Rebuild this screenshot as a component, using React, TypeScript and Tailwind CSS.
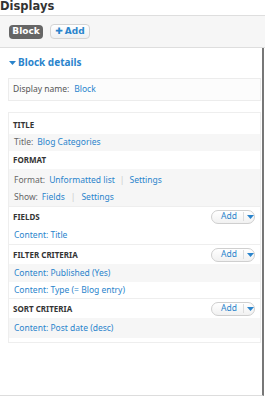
import React from "react";

const blue = "text-[#2a84cc]";

function AddPill() {
  return (
    <div className="flex items-center h-[14px] w-[44px] rounded-full border border-[#cfcfcf] bg-gradient-to-b from-white to-[#f1f1f1] text-[8.5px]">
      <span className={`pl-[9px] w-[31px] ${blue}`}>Add</span>
      <span className="h-[9px] border-l border-[#ddd]" />
      <svg width="7" height="4" viewBox="0 0 7 4" className="ml-[3px]">
        <path d="M0 0 L7 0 L3.5 4 Z" fill="#2a84cc" />
      </svg>
    </div>
  );
}

function Header({ label, add, h = "h-[20px]", extra = "" }: { label: string; add?: boolean; h?: string; extra?: string }) {
  return (
    <div className={`flex items-center justify-between ${h} pl-[4px] pr-[5px] bg-white ${extra}`}>
      <span className="font-bold text-[8px] text-[#333] uppercase">{label}</span>
      {add && <AddPill />}
    </div>
  );
}

function Row({ children, gray, h = "h-[18px]", extra = "" }: { children: React.ReactNode; gray?: boolean; h?: string; extra?: string }) {
  return (
    <div className={`flex items-center ${h} pl-[5px] text-[8.5px] ${gray ? "bg-[#f6f6f6]" : "bg-white"} ${extra}`}>
      {children}
    </div>
  );
}

export default function App() {
  return (
    <div
      className="w-[265px] h-[396px] bg-white overflow-hidden flex flex-col"
      style={{ fontFamily: '"Noto Sans", "Open Sans", sans-serif' }}
    >
      <div
        className="h-[15px] text-[11.5px] font-bold text-[#333] leading-[13px] pl-0"
        style={{ fontFamily: '"DejaVu Sans", Verdana, sans-serif' }}
      >
        Displays
      </div>
      <div className="h-[33px] border-y border-[#dedede] bg-[#f6f6f6] flex items-center gap-[7px] pl-[9px]">
        <div
          className="h-[14px] w-[34px] rounded-[4px] bg-[#666] text-white font-bold text-[9px] flex items-center justify-center"
          style={{ fontFamily: '"DejaVu Sans", Verdana, sans-serif' }}
        >
          Block
        </div>
        <div
          className={`h-[15px] w-[40px] rounded-[4px] border border-[#d4d4d4] bg-gradient-to-b from-white to-[#eef0f2] font-bold text-[9px] flex items-center justify-center ${blue}`}
          style={{ fontFamily: '"DejaVu Sans", Verdana, sans-serif' }}
        >
          <span className="mr-[2px]">✚</span>Add
        </div>
      </div>
      <div className="flex-1 border-r-2 border-r-[#777] border-b border-b-[#ddd] w-[264px] pl-[8px] pr-[1px] pt-[7px]">
        <div className={`flex items-center h-[15px] font-bold text-[10px] ${blue}`}>
          <svg width="7" height="4" viewBox="0 0 7 4" className="mr-[2px] ml-[1px]">
            <path d="M0 0 L7 0 L3.5 4 Z" fill="#2a84cc" />
          </svg>
          Block details
        </div>
        <div className="mt-[8px] h-[23px] border border-[#ececec] bg-[#fcfcfc] flex items-center pl-[4px] text-[8.5px] text-[#555]">
          Display name:<span className={`ml-[5px] ${blue}`}>Block</span>
        </div>
        <div className="mt-[11px] border border-[#eee] pb-[4px] bg-white">
          <Header label="Title" h="h-[21px]" extra="pt-[3px]" />
          <Row gray h="h-[17px]">
            <span className="text-[#666]">Title:</span>
            <span className={`ml-[4px] ${blue}`}>Blog Categories</span>
          </Row>
          <Header label="Format" h="h-[18px]" />
          <Row gray h="h-[20px]" extra="pt-[3px]">
            <span className="text-[#666]">Format:</span>
            <span className={`ml-[4px] ${blue}`}>Unformatted list</span>
            <span className="mx-[5px] text-[#ccc]">|</span>
            <span className={blue}>Settings</span>
          </Row>
          <Row gray h="h-[17px]">
            <span className="text-[#666]">Show:</span>
            <span className={`ml-[4px] ${blue}`}>Fields</span>
            <span className="mx-[6px] text-[#ccc]">|</span>
            <span className={blue}>Settings</span>
          </Row>
          <div className="border-t border-[#eee]">
            <Header label="Fields" add h="h-[19px]" />
            <Row h="h-[18px]" extra="pt-[1px]">
              <span className={blue}>Content: Title</span>
            </Row>
          </div>
          <div className="border-t border-[#eee]">
            <Header label="Filter criteria" add h="h-[19px]" />
            <Row gray h="h-[18px]" extra="pt-[1px]">
              <span className={blue}>Content: Published (Yes)</span>
            </Row>
            <Row h="h-[16px]">
              <span className={blue}>Content: Type (= Blog entry)</span>
            </Row>
          </div>
          <div className="border-t border-[#eee]">
            <Header label="Sort criteria" add h="h-[19px]" />
            <Row gray h="h-[20px]" extra="pt-[1px]">
              <span className={blue}>Content: Post date (desc)</span>
            </Row>
          </div>
        </div>
      </div>
    </div>
  );
}
